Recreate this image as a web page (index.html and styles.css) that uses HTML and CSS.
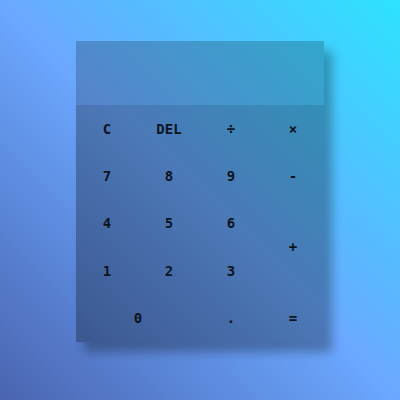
FILE: index.html
```html
<!DOCTYPE html>
<html>
<head>
<meta charset="utf-8">
<link rel="stylesheet" href="styles.css">
</head>
<body>
<div class="calc">
  <div class="display"></div>
  <div class="keys">
    <div class="key">C</div>
    <div class="key">DEL</div>
    <div class="key">÷</div>
    <div class="key">×</div>
    <div class="key">7</div>
    <div class="key">8</div>
    <div class="key">9</div>
    <div class="key">-</div>
    <div class="key">4</div>
    <div class="key">5</div>
    <div class="key">6</div>
    <div class="key plus">+</div>
    <div class="key">1</div>
    <div class="key">2</div>
    <div class="key">3</div>
    <div class="key zero">0</div>
    <div class="key">.</div>
    <div class="key">=</div>
  </div>
</div>
</body>
</html>
```
FILE: styles.css
```css
html, body {
  margin: 0;
  padding: 0;
}
body {
  width: 400px;
  height: 400px;
  box-sizing: border-box;
  padding-top: 41px;
  display: flex;
  justify-content: center;
  align-items: flex-start;
  background: linear-gradient(45deg, #4a64b0 0%, #6ba8ff 50%, #2de3ff 100%);
  font-family: "DejaVu Sans Mono", monospace;
}
.calc {
  width: 248px;
  background: rgba(0, 0, 0, 0.2);
  box-shadow: 8px 10px 10px rgba(0, 0, 0, 0.3);
  display: flex;
  flex-direction: column;
}
.display {
  height: 64px;
}
.keys {
  display: grid;
  grid-template-columns: repeat(4, 62px);
  grid-auto-rows: 47.4px;
  background: rgba(0, 0, 0, 0.1);
}
.key {
  display: flex;
  align-items: center;
  justify-content: center;
  font-size: 14px;
  font-weight: bold;
  color: #0d1420;
}
.plus {
  grid-column: 4;
  grid-row: 3 / span 2;
}
.zero {
  grid-column: 1 / span 2;
}
```
